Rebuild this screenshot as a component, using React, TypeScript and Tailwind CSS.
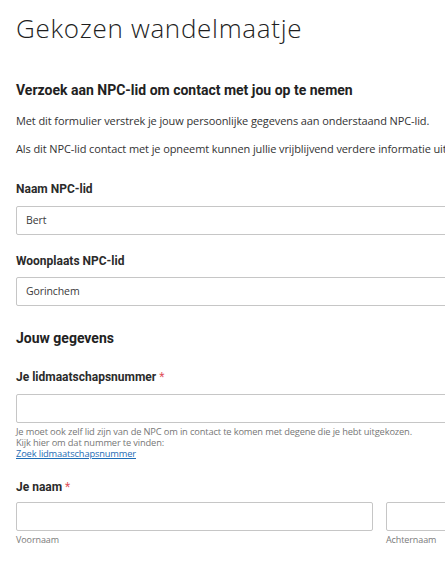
import React from "react";

const body = { fontFamily: '"Open Sans", "Noto Sans", sans-serif' };
const strong = { fontFamily: 'Roboto, "Open Sans", sans-serif' };

function Label({ children, req }: { children: React.ReactNode; req?: boolean }) {
  return (
    <div style={strong} className="text-[12px] font-bold leading-[16px] text-[#2b2b2b]">
      {children}
      {req && <span className="font-normal text-[#e0535c]"> *</span>}
    </div>
  );
}

function Input({ value }: { value?: string }) {
  return (
    <div className="h-[29px] w-full rounded-[2px] border border-[#c6c6c6] bg-white px-[9px] text-[10.5px] leading-[27px] tracking-[-0.1px] text-[#3a3a3a]">
      {value}
    </div>
  );
}

export default function App() {
  return (
    <div className="h-[563px] w-[445px] overflow-hidden bg-white" style={body}>
      <div className="w-[759px] px-4">
        <h1 className="pt-[10px] text-[26px] font-light leading-[36px] tracking-[0.7px] text-[#1f1f1f]">
          Gekozen wandelmaatje
        </h1>
        <h2 style={strong} className="mt-[34px] text-[14px] font-bold leading-[20px] text-[#222]">
          Verzoek aan NPC-lid om contact met jou op te nemen
        </h2>
        <p className="mt-[13px] text-[11px] leading-[16px] tracking-[-0.1px] text-[#333]">
          Met dit formulier verstrek je jouw persoonlijke gegevens aan onderstaand NPC-lid.
        </p>
        <p className="mt-[12px] whitespace-nowrap text-[11px] leading-[16px] tracking-[-0.1px] text-[#333]">
          Als dit NPC-lid contact met je opneemt kunnen jullie vrijblijvend verdere informatie uitwisselen.
        </p>

        <div className="mt-[24px]">
          <Label>Naam NPC-lid</Label>
          <div className="mt-[9px]">
            <Input value="Bert" />
          </div>
        </div>

        <div className="mt-[18px]">
          <Label>Woonplaats NPC-lid</Label>
          <div className="mt-[8px]">
            <Input value="Gorinchem" />
          </div>
        </div>

        <h2 style={strong} className="mt-[22px] text-[14px] font-bold leading-[20px] text-[#222]">
          Jouw gegevens
        </h2>

        <div className="mt-[21px]">
          <Label req>Je lidmaatschapsnummer</Label>
          <div className="mt-[9px]">
            <Input />
          </div>
          <div className="mt-[3px] text-[9.3px] leading-[11px] tracking-[-0.15px] text-[#777]">
            <div>Je moet ook zelf lid zijn van de NPC om in contact te komen met degene die je hebt uitgekozen.</div>
            <div>Kijk hier om dat nummer te vinden:</div>
            <a href="#" className="text-[#1e6cb5] underline">
              Zoek lidmaatschapsnummer
            </a>
          </div>
        </div>

        <div className="mt-[20px]">
          <Label req>Je naam</Label>
          <div className="mt-[7px] grid grid-cols-2 gap-[13px]">
            <div>
              <Input />
              <div className="mt-[3px] text-[9px] leading-[12px] tracking-[-0.1px] text-[#7a7a7a]">Voornaam</div>
            </div>
            <div>
              <Input />
              <div className="mt-[3px] text-[9px] leading-[12px] tracking-[-0.1px] text-[#7a7a7a]">Achternaam</div>
            </div>
          </div>
        </div>
      </div>
    </div>
  );
}
